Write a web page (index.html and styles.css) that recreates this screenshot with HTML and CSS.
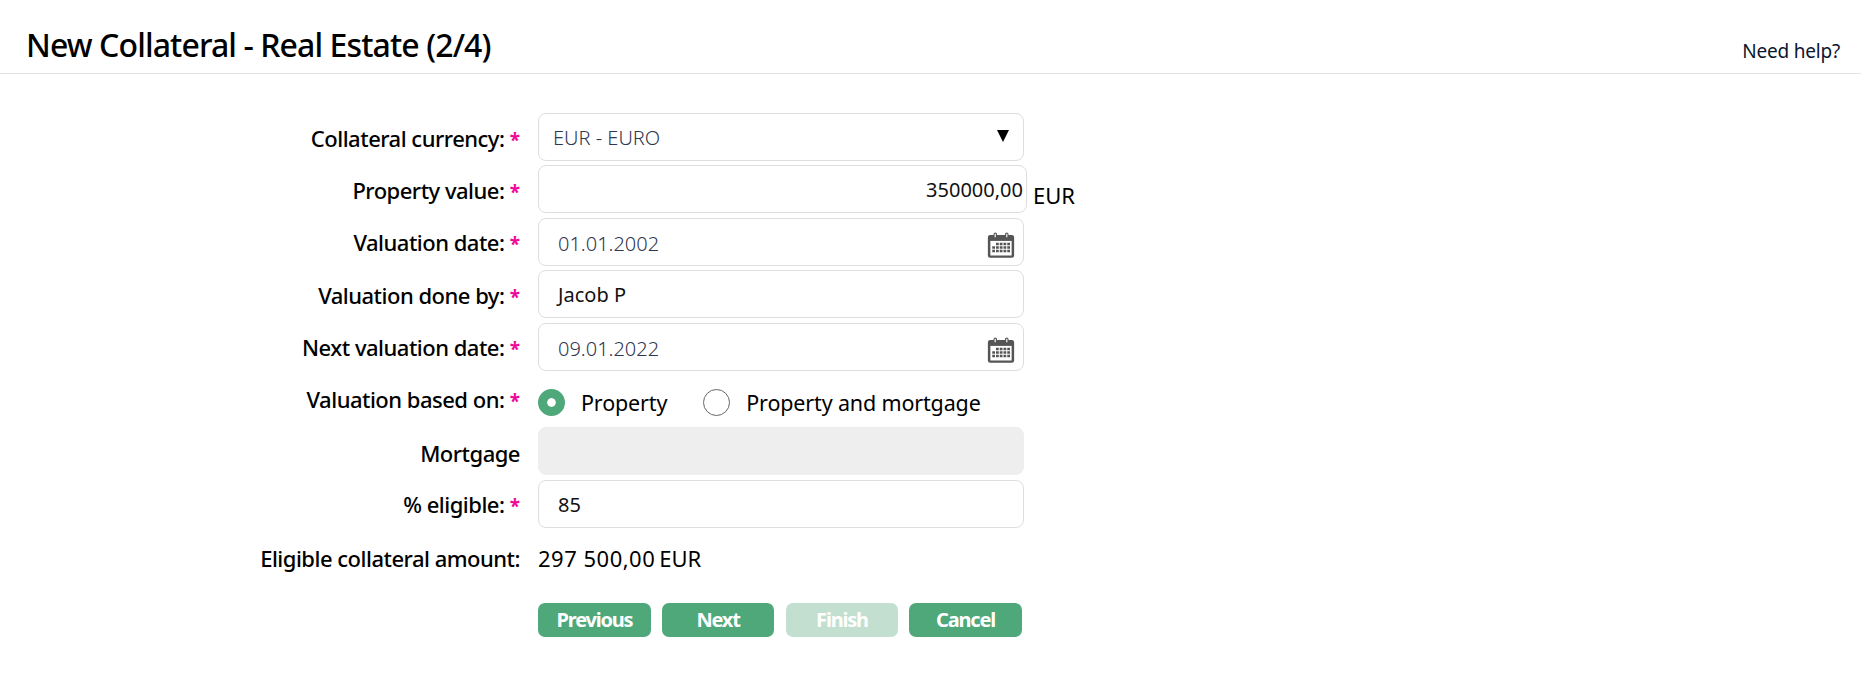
FILE: index.html
```html
<!DOCTYPE html>
<html lang="en">
<head>
<meta charset="utf-8">
<title>New Collateral - Real Estate (2/4)</title>
<link rel="stylesheet" href="styles.css">
</head>
<body>
<header class="page-header">
  <h1 class="page-title">New Collateral - Real Estate (2/4)</h1>
  <a class="help-link">Need help?</a>
</header>
<form class="form">
  <div class="row row-first">
    <label class="label">Collateral currency: <span class="req">*</span></label>
    <div class="field select"><span class="select-text">EUR - EURO</span><span class="caret"></span></div>
  </div>
  <div class="row">
    <label class="label">Property value: <span class="req">*</span></label>
    <div class="field amount">350000,00</div><span class="unit">EUR</span>
  </div>
  <div class="row">
    <label class="label">Valuation date: <span class="req">*</span></label>
    <div class="field date"><span class="date-text">01.01.2002</span>
      <svg class="cal" viewBox="0 0 24 24" preserveAspectRatio="none"><use href="#cal"/></svg></div>
  </div>
  <div class="row">
    <label class="label">Valuation done by: <span class="req">*</span></label>
    <div class="field text">Jacob P</div>
  </div>
  <div class="row">
    <label class="label">Next valuation date: <span class="req">*</span></label>
    <div class="field date"><span class="date-text">09.01.2022</span>
      <svg class="cal" viewBox="0 0 24 24" preserveAspectRatio="none"><use href="#cal"/></svg></div>
  </div>
  <div class="row">
    <label class="label">Valuation based on: <span class="req">*</span></label>
    <div class="radios">
      <span class="radio on"></span><span class="radio-label first">Property</span>
      <span class="radio"></span><span class="radio-label">Property and mortgage</span>
    </div>
  </div>
  <div class="row">
    <label class="label">Mortgage</label>
    <div class="field disabled"></div>
  </div>
  <div class="row">
    <label class="label">% eligible: <span class="req">*</span></label>
    <div class="field text">85</div>
  </div>
  <div class="row">
    <label class="label">Eligible collateral amount:</label>
    <div class="value"><span class="value-num">297 500,00</span><span>EUR</span></div>
  </div>
  <div class="buttons">
    <button type="button" class="btn btn-prev">Previous</button>
    <button type="button" class="btn btn-next">Next</button>
    <button type="button" class="btn btn-off">Finish</button>
    <button type="button" class="btn btn-cancel">Cancel</button>
  </div>
</form>
<svg class="defs" width="0" height="0">
  <symbol id="cal" viewBox="0 0 24 24" preserveAspectRatio="none">
    <path fill="#555" d="M3 3.5h3V2.6a1.4 1.4 0 0 1 2.8 0v.9h6.4v-.9a1.4 1.4 0 0 1 2.8 0v.9h3A1.8 1.8 0 0 1 22.5 5.3v16A1.8 1.8 0 0 1 20.7 23H3.3a1.8 1.8 0 0 1-1.8-1.7v-16A1.8 1.8 0 0 1 3 3.5z"/>
    <path fill="#fff" d="M3.5 8.5h17v12.5h-17z"/>
    <path fill="#555" d="M8 10h2.2v2.2H8zM11 10h2.2v2.2H11zM14 10h2.2v2.2H14zM17 10h2.2v2.2H17zM5 13h2.2v2.2H5zM8 13h2.2v2.2H8zM11 13h2.2v2.2H11zM14 13h2.2v2.2H14zM17 13h2.2v2.2H17zM5 16h2.2v2.2H5zM8 16h2.2v2.2H8zM11 16h2.2v2.2H11zM14 16h2.2v2.2H14zM17 16h2.2v2.2H17z"/>
    <path fill="#fff" d="M6.9 2.4h.9v3h-.9zM16.2 2.4h.9v3h-.9z"/>
  </symbol>
</svg>
</body>
</html>
```
FILE: styles.css
```css
* { box-sizing: border-box; }
html, body { margin: 0; padding: 0; background: #fff; }
body { font-family: "Noto Sans", "Open Sans", sans-serif; color: #000; height: 683px; overflow: hidden; }
.page-header {
  height: 74px;
  border-bottom: 1px solid #e3e3e3;
  display: flex;
  justify-content: space-between;
  align-items: flex-end;
  padding: 0 21px 0 26px;
}
.page-title { margin: 0 0 7px; font-size: 32px; line-height: 42px; font-weight: 500; letter-spacing: -0.9px; }
.help-link { margin-bottom: 10px; font-size: 19px; line-height: 24px; color: #0b1530; letter-spacing: -0.2px; }
.form { padding-top: 39px; }
.row { display: flex; align-items: center; height: 48px; margin-bottom: 4.4px; }
.label {
  width: 520px;
  text-align: right;
  font-size: 22px;
  font-weight: 500;
  letter-spacing: -0.5px;
  line-height: 26px;
  white-space: nowrap;
  padding-top: 3px;
}
.req { color: #f0089a; font-size: 19px; font-weight: 700; letter-spacing: 0; }
.field {
  margin-left: 18px;
  width: 486px;
  height: 48px;
  border: 1px solid #dedede;
  border-radius: 8px;
  background: #fff;
  display: flex;
  align-items: center;
  font-size: 20px;
  font-weight: 400;
}
.select { justify-content: space-between; padding: 0 14px; color: #2f3650; font-weight: 300; }
.caret { width: 0; height: 0; border-left: 6px solid transparent; border-right: 6px solid transparent; border-top: 12px solid #000; margin-bottom: 2px; }
.amount { width: 489px; justify-content: flex-end; padding-right: 3px; color: #111; }
.unit { margin-left: 6px; font-size: 22px; margin-top: 12px; }
.date { justify-content: space-between; padding: 0 7px 0 19px; color: #2f3650; font-weight: 300; }
.date-text { padding-top: 3px; }
.cal { width: 30px; height: 28px; display: block; margin-top: 6px; }
.text { padding-left: 19px; color: #111; padding-top: 1px; }
.disabled { background: #eeeeee; border-color: #eeeeee; }
.radios { margin-left: 18px; padding-top: 8px; display: flex; align-items: center; font-size: 21.5px; letter-spacing: -0.15px; }
.radio { width: 27px; height: 27px; border-radius: 50%; border: 1px solid #666; background: #fff; display: block; }
.radio.on { background: #4ea87a; border: 9px solid #4ea87a; box-shadow: inset 0 0 0 5px #fff; }
.radio-label { margin-left: 16px; }
.radio-label.first { margin-right: 36px; }
.value { margin-left: 18px; padding-top: 3px; display: flex; gap: 4px; font-size: 22px; }
.value-num { letter-spacing: 0.5px; }
.buttons { display: flex; margin-left: 538px; margin-top: 23px; }
.btn {
  width: 112px;
  height: 34px;
  border: 0;
  border-radius: 7px;
  background: #4ea87a;
  color: #fff;
  font-family: inherit;
  font-size: 20px;
  font-weight: 700;
  letter-spacing: -1.2px;
  padding: 0 0 1px;
}
.btn-prev, .btn-cancel { width: 113px; }
.btn-next { margin: 0 12px 0 11px; }
.btn-cancel { margin-left: 11px; }
.btn-off { background: #c2dfd0; }
.defs { position: absolute; }
```
